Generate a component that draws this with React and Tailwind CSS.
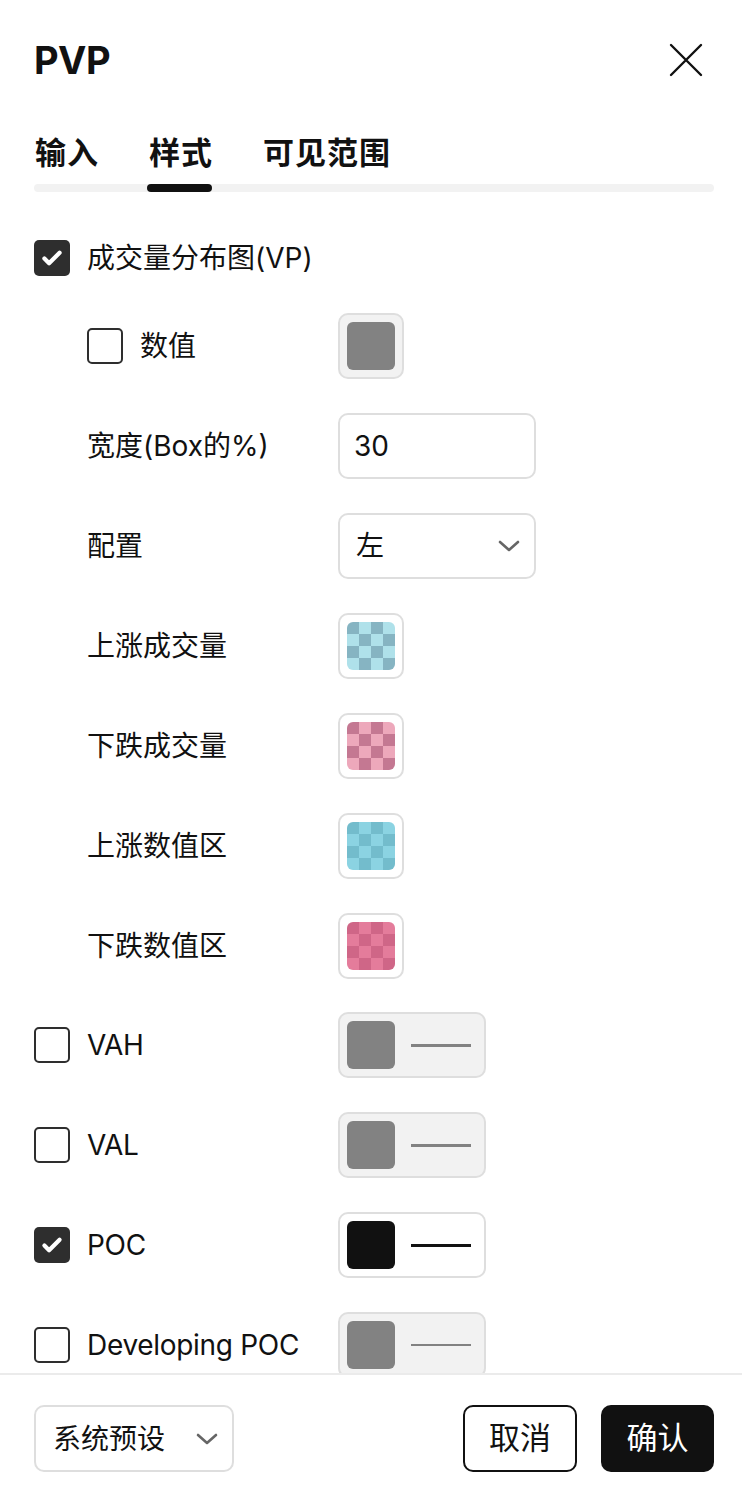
import { useState } from "react";

const font = { fontFamily: 'Inter, "Noto Sans CJK SC", sans-serif' };

function CheckBox({ checked }) {
  return checked ? (
    <span className="w-9 h-9 rounded-[5px] bg-[#2e2e2e] flex items-center justify-center shrink-0">
      <svg width="28" height="28" viewBox="0 0 24 24" fill="none">
        <path d="M5.5 12.5l4 4L18.5 7.5" stroke="#fff" strokeWidth="3.6" strokeLinecap="round" strokeLinejoin="round" />
      </svg>
    </span>
  ) : (
    <span className="w-9 h-9 rounded-[5px] border-2 border-[#2e2e2e] bg-white shrink-0" />
  );
}

function Chevron() {
  return (
    <svg width="22" height="12" viewBox="0 0 22 12" fill="none">
      <path d="M2 2l9 8 9-8" stroke="#666" strokeWidth="2.6" strokeLinecap="round" strokeLinejoin="round" />
    </svg>
  );
}

function Checker({ dark, light }) {
  const cells = [];
  for (let r = 0; r < 4; r++) {
    for (let c = 0; c < 4; c++) {
      cells.push((r + c) % 2 === 0 ? dark : light);
    }
  }
  return (
    <div className="w-12 h-12 rounded-[6px] overflow-hidden grid grid-cols-4">
      {cells.map((col, i) => (
        <div key={i} style={{ backgroundColor: col }} />
      ))}
    </div>
  );
}

function LineSwatch({ color, disabled, thin }) {
  return (
    <div
      className={
        disabled
          ? "w-[148px] h-[66px] rounded-[10px] border-2 border-[#dedede] bg-[#f2f2f2] flex items-center px-[7px] gap-4"
          : "w-[148px] h-[66px] rounded-[10px] border-2 border-[#dedede] bg-white flex items-center px-[7px] gap-4"
      }
    >
      <div className="w-12 h-12 rounded-[6px]" style={{ backgroundColor: color }} />
      <div className={thin ? "w-[60px] h-[2px]" : "w-[60px] h-[3px]"} style={{ backgroundColor: color }} />
    </div>
  );
}

const checkers = [
  { label: "上涨成交量", dark: "#86b4c2", light: "#afe1ea" },
  { label: "下跌成交量", dark: "#c47892", light: "#eda8bb" },
  { label: "上涨数值区", dark: "#73bccc", light: "#8bd3e2" },
  { label: "下跌数值区", dark: "#cf6687", light: "#e47c9b" },
];

const lines = [
  { label: "VAH", checked: false, color: "#828282" },
  { label: "VAL", checked: false, color: "#828282" },
  { label: "POC", checked: true, color: "#111111" },
  { label: "Developing POC", checked: false, color: "#828282", thin: true },
];

export default function App() {
  const [tab] = useState(1);
  const tabs = ["输入", "样式", "可见范围"];

  return (
    <div className="w-[742px] h-[1496px] bg-white flex flex-col text-[#111] overflow-hidden" style={font}>
      <div className="pl-[34px] pr-[28px] pt-[36px]">
        <div className="flex items-center justify-between h-[48px]">
          <h1 className="text-[38px] font-bold leading-none tracking-[-0.5px]">PVP</h1>
          <svg width="36" height="36" viewBox="0 0 36 36" fill="none" className="mr-[10px]">
            <path d="M3 3l30 30M33 3L3 33" stroke="#111" strokeWidth="2.4" strokeLinecap="round" />
          </svg>
        </div>

        <div className="mt-[48px] flex gap-[50px] pl-px">
          {tabs.map((t, i) => (
            <span
              key={t}
              className={i === tab ? "text-[31px] font-bold leading-[42px] tracking-[1px]" : "text-[31px] font-bold leading-[42px] tracking-[1px]"}
            >
              {t}
            </span>
          ))}
        </div>
        <div className="mt-[10px] h-[8px] rounded-full bg-[#f2f2f2] relative">
          <div className="absolute left-[113px] top-0 h-[8px] w-[65px] rounded-full bg-[#111]" />
        </div>
      </div>

      <div className="flex-1 overflow-hidden px-[34px] pt-[48px] text-[28px]">
        <div className="flex items-center gap-[17px] h-[36px]">
          <CheckBox checked />
          <span className="leading-none">成交量分布图(VP)</span>
        </div>

        <div className="mt-[37px] flex flex-col gap-[34px] pl-[53px]">
          <div className="flex items-center h-[66px]">
            <div className="w-[251px] flex items-center gap-[17px]">
              <CheckBox checked={false} />
              <span>数值</span>
            </div>
            <div className="w-[66px] h-[66px] rounded-[10px] border-2 border-[#dedede] bg-[#f2f2f2] flex items-center justify-center">
              <div className="w-12 h-12 rounded-[6px] bg-[#828282]" />
            </div>
          </div>

          <div className="flex items-center h-[66px]">
            <span className="w-[251px]">宽度(Box的%)</span>
            <div className="w-[198px] h-[66px] rounded-[10px] border-2 border-[#dedede] flex items-center px-[14px]">30</div>
          </div>

          <div className="flex items-center h-[66px]">
            <span className="w-[251px]">配置</span>
            <div className="w-[198px] h-[66px] rounded-[10px] border-2 border-[#dedede] flex items-center justify-between pl-[16px] pr-[14px]">
              <span>左</span>
              <Chevron />
            </div>
          </div>

          {checkers.map((c) => (
            <div key={c.label} className="flex items-center h-[66px]">
              <span className="w-[251px]">{c.label}</span>
              <div className="w-[66px] h-[66px] rounded-[10px] border-2 border-[#dedede] bg-white flex items-center justify-center">
                <Checker dark={c.dark} light={c.light} />
              </div>
            </div>
          ))}
        </div>

        <div className="mt-[33px] flex flex-col gap-[34px]">
          {lines.map((l) => (
            <div key={l.label} className="flex items-center h-[66px]">
              <div className="w-[304px] flex items-center gap-[17px]">
                <CheckBox checked={l.checked} />
                <span className="tracking-[-0.3px]">{l.label}</span>
              </div>
              <LineSwatch color={l.color} disabled={!l.checked} thin={l.thin} />
            </div>
          ))}
        </div>
      </div>

      <div className="h-[123px] shrink-0 border-t-2 border-[#ebebeb] pl-[34px] pr-[28px] pt-[6px] flex items-center justify-between">
        <div className="w-[200px] h-[67px] rounded-[10px] border-2 border-[#dedede] flex items-center justify-between pl-[17px] pr-[14px] text-[28px]">
          <span>系统预设</span>
          <Chevron />
        </div>
        <div className="flex gap-[24px]">
          <button className="w-[114px] h-[67px] rounded-[10px] border-2 border-[#111] bg-white text-[31px] flex items-center justify-center">取消</button>
          <button className="w-[113px] h-[67px] rounded-[10px] bg-[#111] text-white text-[31px] flex items-center justify-center">确认</button>
        </div>
      </div>
    </div>
  );
}
